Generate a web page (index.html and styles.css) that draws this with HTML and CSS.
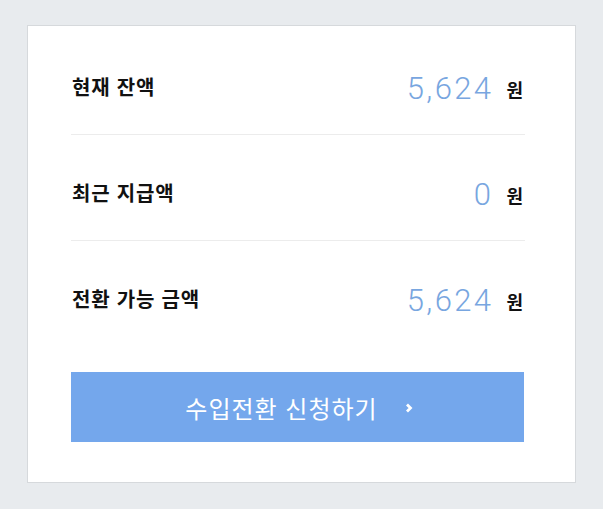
FILE: index.html
```html
<!DOCTYPE html>
<html lang="ko">
<head>
    <meta charset="UTF-8">
    <meta name="viewport" content="width=device-width, initial-scale=1.0">
    <title>잔액</title>
    <link rel="stylesheet" href="styles.css">
</head>
<body>
    <div class="card">
        <div class="row">
            <span class="label">현재 잔액</span>
            <span class="amount"><span class="num">5,624</span><span class="unit">원</span></span>
        </div>
        <div class="row">
            <span class="label">최근 지급액</span>
            <span class="amount"><span class="num">0</span><span class="unit">원</span></span>
        </div>
        <div class="row last">
            <span class="label">전환 가능 금액</span>
            <span class="amount"><span class="num">5,624</span><span class="unit">원</span></span>
        </div>
        <button type="button" class="convert">
            수입전환 신청하기
            <svg class="chev" width="10" height="12" viewBox="0 0 10 12"><path d="M3 2.5 L6.5 6 L3 9.5" fill="none" stroke="#fff" stroke-width="2.8"/></svg>
        </button>
    </div>
</body>
</html>
```

FILE: styles.css
```css
body {
    margin: 0;
    background-color: #e8ebee;
    font-family: "Noto Sans CJK KR", "Noto Sans", sans-serif;
}

.card {
    background-color: #fff;
    border: 1px solid #d6d9dc;
    width: 454px;
    margin: 25px 0 0 27px;
    padding: 0 50px 40px 43px;
}

.row {
    display: flex;
    justify-content: space-between;
    align-items: center;
    height: 30px;
    padding: 44px 2px 31px 1px;
    border-bottom: 1px solid #ececec;
}

.row:first-child {
    padding-top: 47px;
}

.row.last {
    border-bottom: none;
}

.label {
    font-size: 20px;
    font-weight: bold;
    letter-spacing: 0.8px;
    color: #111;
    margin-top: -4px;
}

.amount {
    display: flex;
    align-items: center;
}

.num {
    font-family: Roboto, sans-serif;
    font-weight: 300;
    font-size: 31px;
    letter-spacing: 2.4px;
    color: #78a6e0;
    margin-right: 13px;
}

.unit {
    font-size: 18px;
    font-weight: bold;
    color: #111;
    margin-top: 2px;
}

.convert {
    display: flex;
    align-items: center;
    justify-content: center;
    width: 453px;
    height: 70px;
    margin-top: 26px;
    border: none;
    background-color: #74a7ec;
    color: #fff;
    font-family: "Noto Sans CJK KR", sans-serif;
    font-size: 24px;
    letter-spacing: 1px;
    padding: 0 0 0 4px;
    cursor: pointer;
}

.chev {
    margin-left: 26px;
    margin-top: 2px;
}
```
